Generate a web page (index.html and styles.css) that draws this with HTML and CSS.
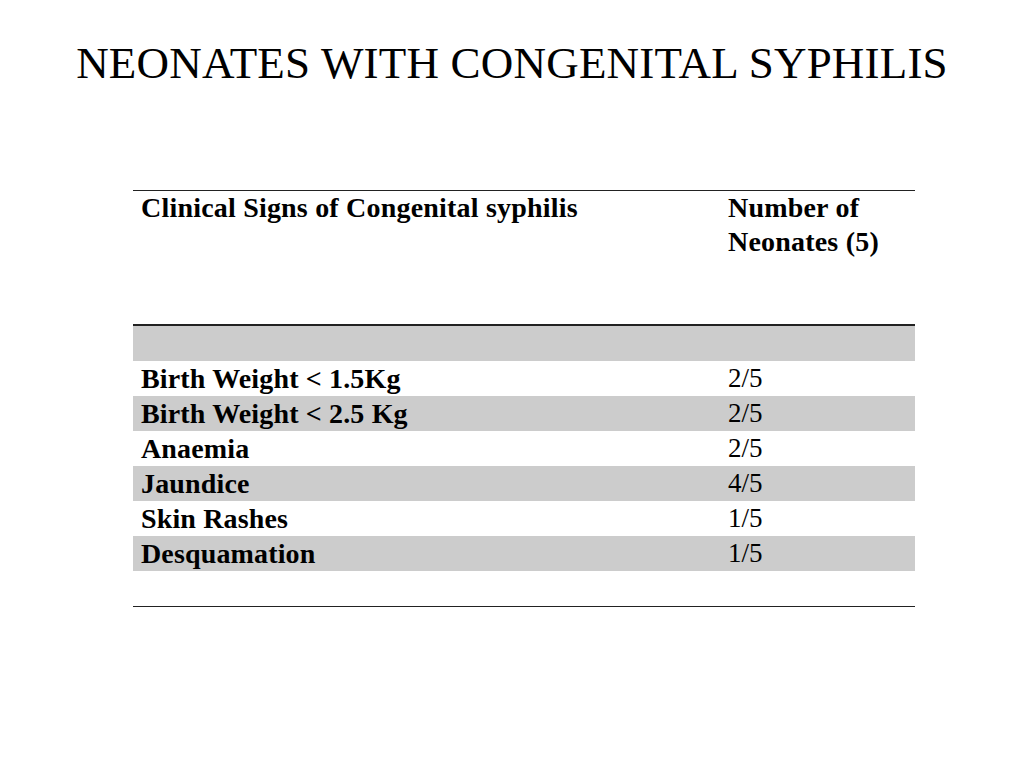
FILE: index.html
```html
<!DOCTYPE html>
<html>
<head>
<meta charset="utf-8">
<link rel="stylesheet" href="styles.css">
</head>
<body>
<div class="slide">
  <h1 class="title">NEONATES WITH CONGENITAL SYPHILIS</h1>
  <table class="data">
    <thead>
      <tr class="head">
        <th class="c1">Clinical Signs of Congenital syphilis</th>
        <th class="c2">Number of<br>Neonates (5)</th>
      </tr>
    </thead>
    <tbody>
      <tr class="shade"><td class="c1"></td><td class="c2"></td></tr>
      <tr><td class="c1">Birth Weight &lt; 1.5Kg</td><td class="c2">2/5</td></tr>
      <tr class="shade"><td class="c1">Birth Weight &lt; 2.5 Kg</td><td class="c2">2/5</td></tr>
      <tr><td class="c1">Anaemia</td><td class="c2">2/5</td></tr>
      <tr class="shade"><td class="c1">Jaundice</td><td class="c2">4/5</td></tr>
      <tr><td class="c1">Skin Rashes</td><td class="c2">1/5</td></tr>
      <tr class="shade"><td class="c1">Desquamation</td><td class="c2">1/5</td></tr>
      <tr class="last"><td class="c1"></td><td class="c2"></td></tr>
    </tbody>
  </table>
</div>
</body>
</html>
```
FILE: styles.css
```css
html, body {
  margin: 0;
  padding: 0;
  background: #ffffff;
}
.slide {
  width: 1024px;
  height: 768px;
  font-family: "Liberation Serif", "Times New Roman", serif;
  color: #000;
  overflow: hidden;
}
.title {
  margin: 0;
  padding-top: 35px;
  height: 190px;
  box-sizing: border-box;
  text-align: center;
  font-weight: normal;
  font-size: 45px;
  letter-spacing: 0.2px;
  line-height: 56px;
}
.data {
  margin-left: 133px;
  width: 782px;
  border-collapse: collapse;
  table-layout: fixed;
}
.data .c1 { width: 579px; padding: 0 0 0 8px; text-align: left; }
.data .c2 { width: 187px; padding: 0 0 0 8px; text-align: left; }
.data th {
  font-weight: bold;
  font-size: 28px;
  letter-spacing: 0.2px;
  line-height: 34px;
  vertical-align: top;
  padding-top: 1px;
}
.head th {
  border-top: 1px solid #222;
  border-bottom: 2px solid #222;
  height: 133px;
}
.data td {
  height: 35px;
  padding-top: 0;
  padding-bottom: 0;
  vertical-align: middle;
  font-size: 27px;
  line-height: 35px;
}
.data td.c1 { font-weight: bold; font-size: 28px; letter-spacing: 0.15px; }
.shade td { background: #cccccc; }
.last td { border-bottom: 1.5px solid #222; }
```
